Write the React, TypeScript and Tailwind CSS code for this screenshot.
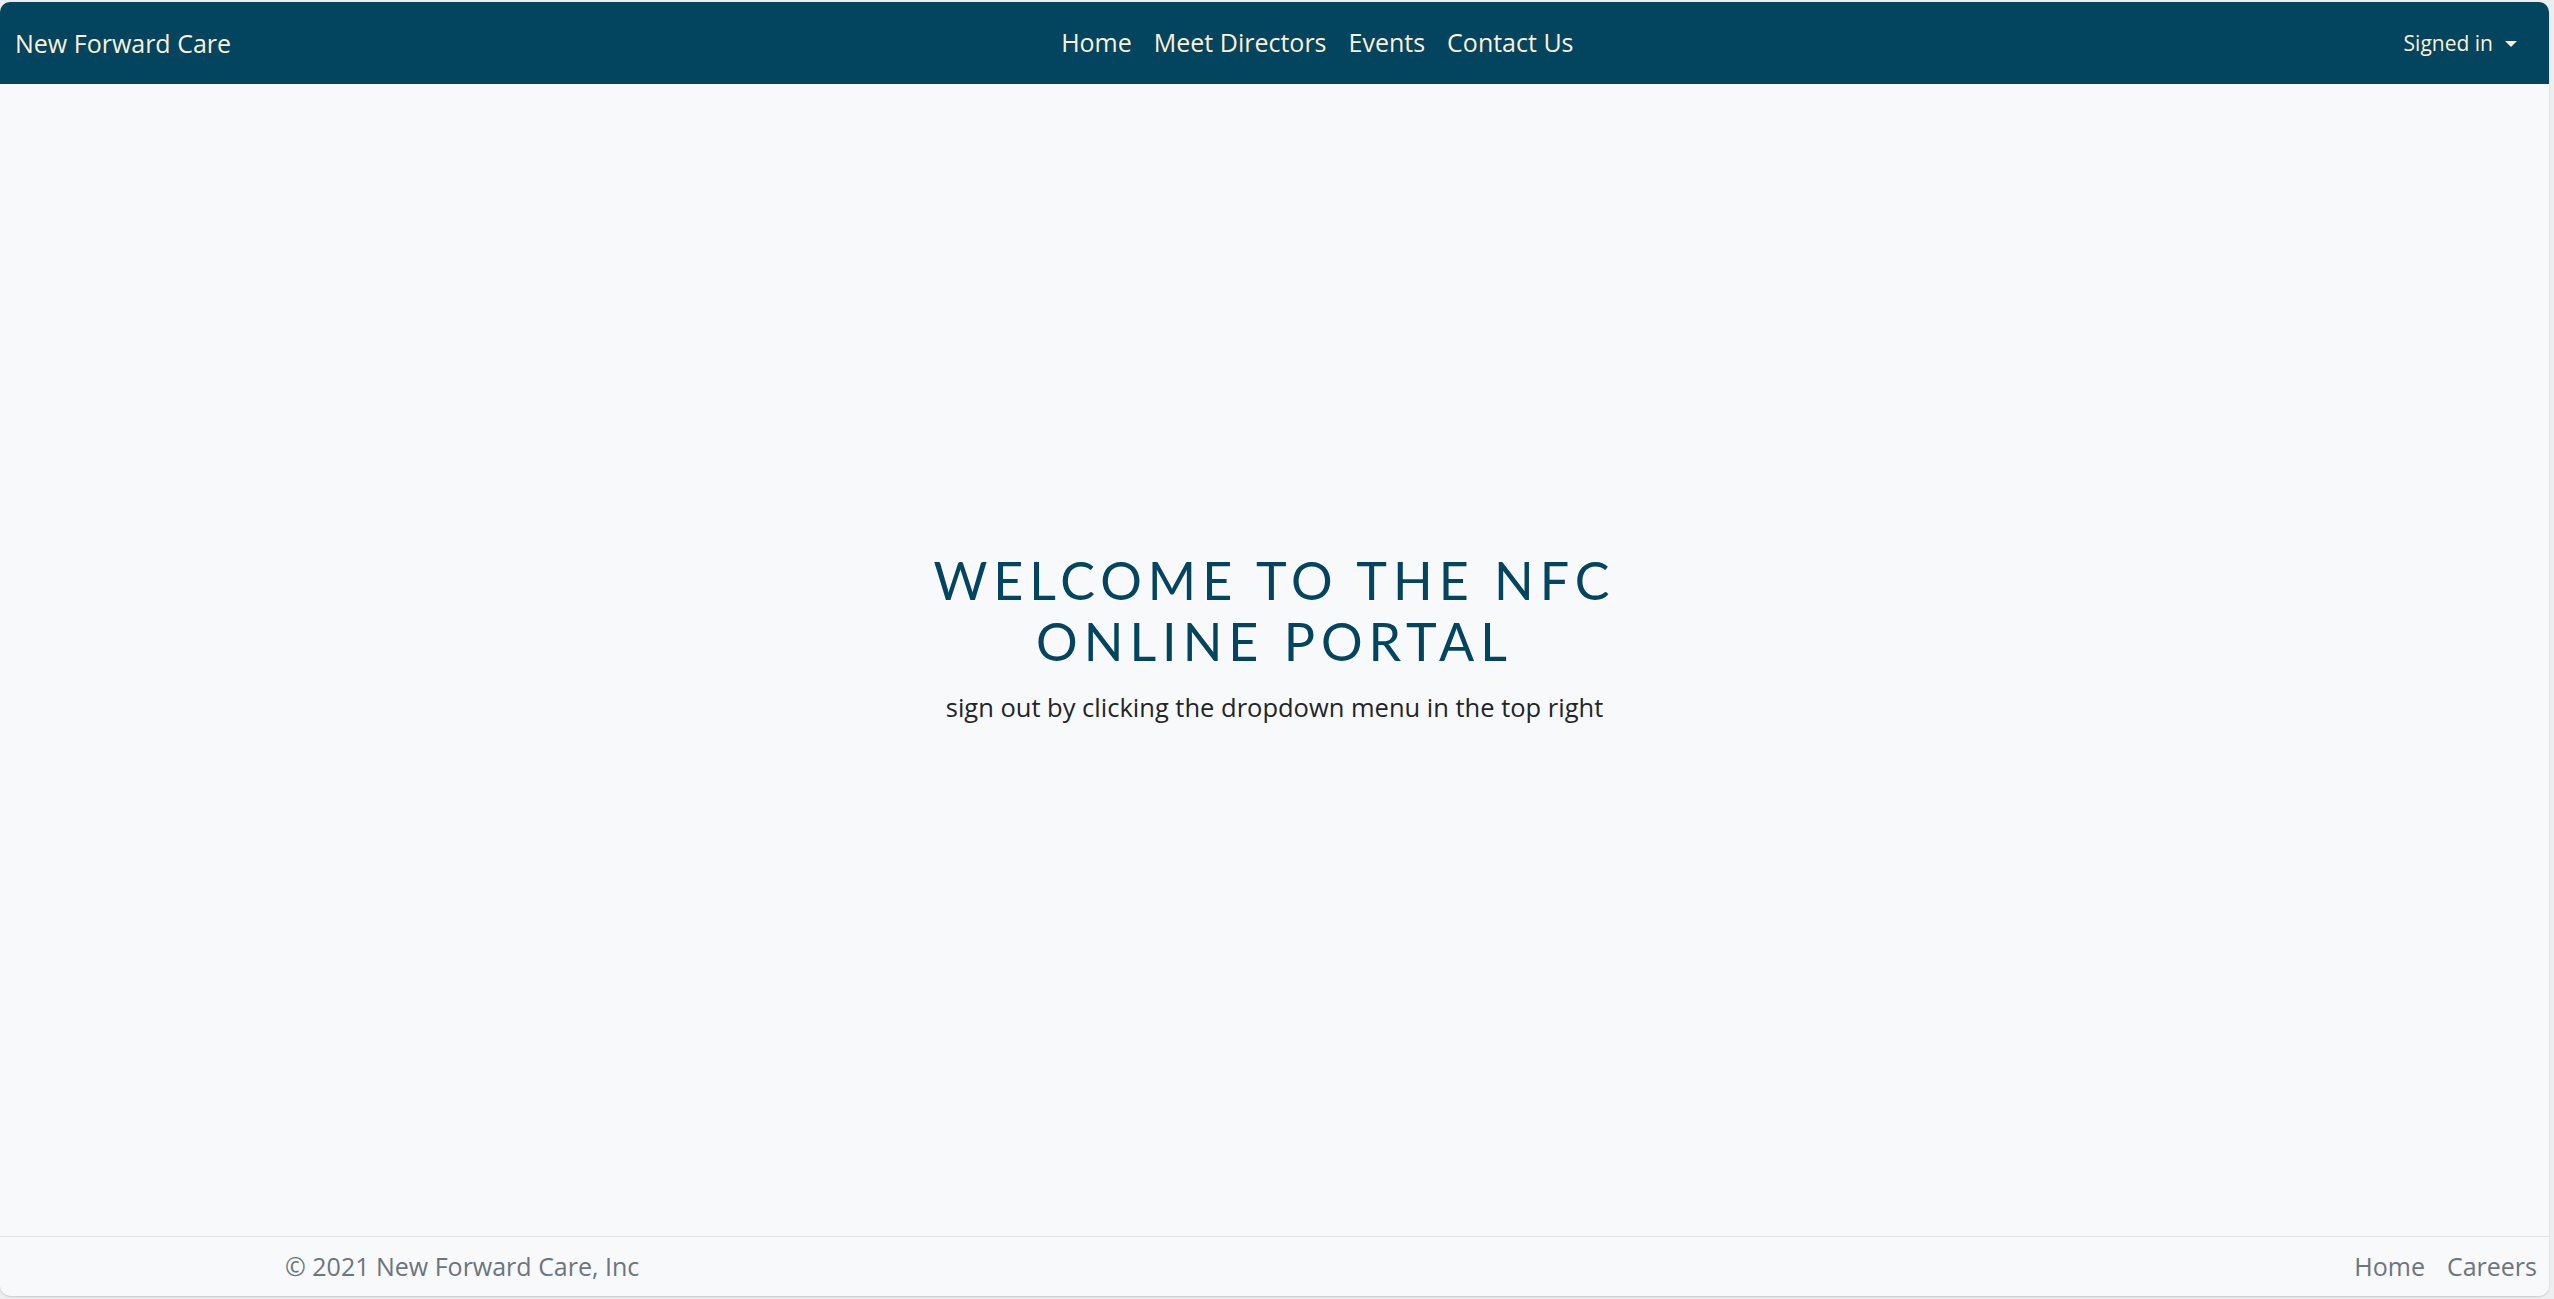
const navLinks = ["Home", "Meet Directors", "Events", "Contact Us"];

const Navbar = () => (
  <nav className="flex h-[82px] shrink-0 items-center bg-[#03445e] pl-[15px] pr-[32px] text-[#fdf0d8]">
    <a className="text-[25px] leading-none">New Forward Care</a>
    <ul className="mx-auto flex items-center pt-[2px]">
      {navLinks.map((link) => (
        <li key={link}>
          <a className="px-[11px] text-[25px] leading-none">{link}</a>
        </li>
      ))}
    </ul>
    <button className="flex items-center gap-[12px] text-[21px] leading-none">
      Signed in
      <span className="mt-[2px] h-0 w-0 border-x-[6px] border-t-[6px] border-x-transparent border-t-[#fdf0d8]" />
    </button>
  </nav>
);

const Footer = () => (
  <footer className="flex h-[60px] shrink-0 items-center justify-between border-t border-[#dee2e6] pl-[285px] pr-[12px] text-[25px] text-[#6c757d]">
    <span>© 2021 New Forward Care, Inc</span>
    <ul className="flex items-center gap-[22px]">
      <li>Home</li>
      <li>Careers</li>
    </ul>
  </footer>
);

export default function App() {
  return (
    <div
      className="h-[1299px] w-full bg-[#eceef0] pt-[2px] pr-[5px] pb-[3px]"
      style={{ fontFamily: '"Open Sans", "Noto Sans", sans-serif' }}
    >
      <div className="flex h-full flex-col overflow-hidden rounded-[10px] bg-[#f8f9fa] shadow-[0_1px_2px_rgba(0,0,0,0.15)]">
        <Navbar />
        <main className="flex flex-1 flex-col items-center justify-center pb-[44px] text-center">
          <h1
            className="text-[52px] leading-[61px] tracking-[6px] text-[#03445e]"
            style={{ fontFamily: "Lato, sans-serif" }}
          >
            WELCOME TO THE NFC
            <br />
            ONLINE PORTAL
          </h1>
          <p className="mt-[16px] text-[25.5px] text-[#212529]">
            sign out by clicking the dropdown menu in the top right
          </p>
        </main>
        <Footer />
      </div>
    </div>
  );
}
